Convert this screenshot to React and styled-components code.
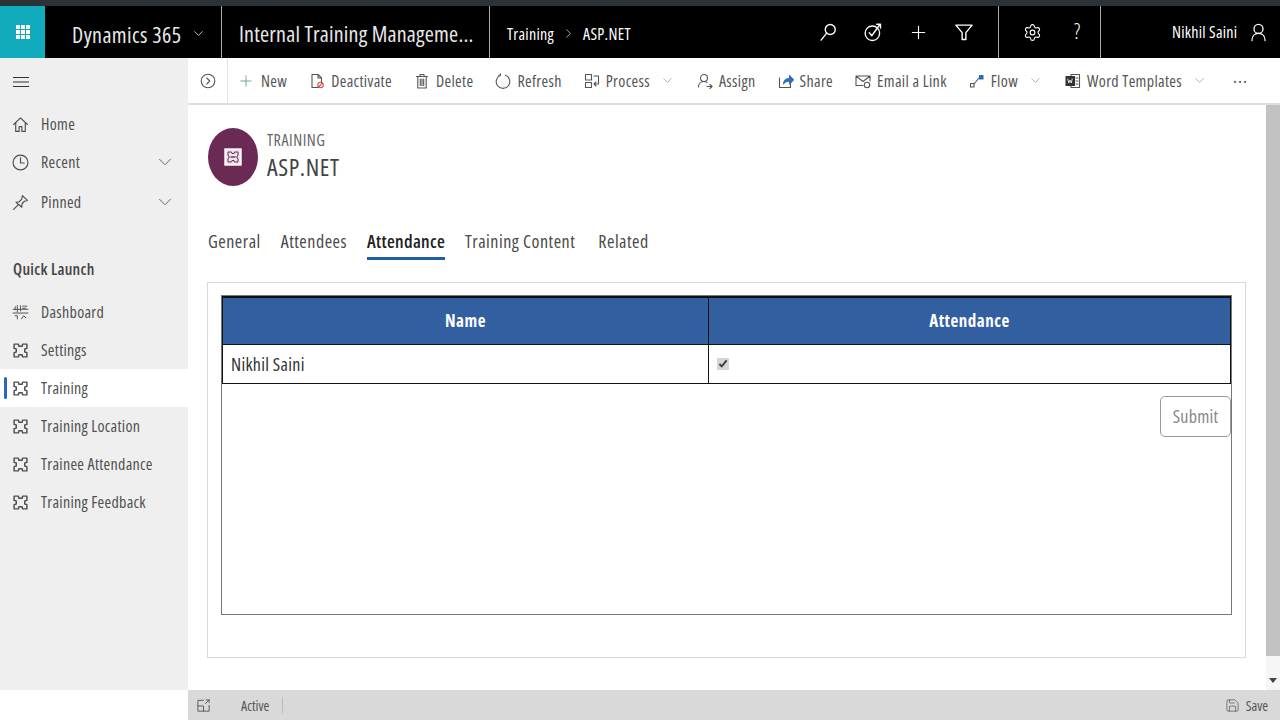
import React from 'react';
import styled, { createGlobalStyle } from 'styled-components';
import { ChevronDown, ChevronRight, Plus, Settings, Save } from 'lucide-react';

const GlobalStyle = createGlobalStyle`
  html, body { margin: 0; padding: 0; height: 100%; overflow: hidden; background: #fff; }
  #root { height: 100%; }
  * { box-sizing: border-box; }
  body {
    font-family: "Open Sans", "Noto Sans", "Liberation Sans", sans-serif;
    font-stretch: 85%;
  }
`;

function Icon({ size = 16, w, h, sw = 1.1, children, ...rest }) {
  return (
    <svg width={w || size} height={h || size} viewBox="0 0 16 16" fill="none" stroke="currentColor" strokeWidth={sw} strokeLinecap="round" strokeLinejoin="round" {...rest}>
      {children}
    </svg>
  );
}

const Puzzle = () => (
  <Icon size={17} sw={1.4}>
    <path d="M2 2h4l.5 2h3L10 2h4v4l-2 .5v3l2 .5v4h-4l-.5-2h-3L6 14H2v-4l2-.5v-3L2 6z" />
  </Icon>
);

const Dashboard = () => (
  <Icon size={17} sw={0.9}>
    <path d="M1 5h14M1 8.500h14M5 1.500v6M3 2.500v3M8 1.500v5M10 2h4M10 4h3M3 11h2v3M9 14l2-3 2 2" />
  </Icon>
);

const navItems = [
  { label: 'Dashboard', icon: <Dashboard /> },
  { label: 'Settings', icon: <Puzzle /> },
  { label: 'Training', icon: <Puzzle />, active: true },
  { label: 'Training Location', icon: <Puzzle /> },
  { label: 'Trainee Attendance', icon: <Puzzle /> },
  { label: 'Training Feedback', icon: <Puzzle /> },
];

const commands = [
  { label: 'New', icon: <Plus size={18} color="#4f9c8c" strokeWidth={1.1} /> },
  {
    label: 'Deactivate',
    icon: (
      <Icon>
        <path d="M9 14.500H3V1.500h6l3.500 3.500v3.500M9 1.500V5h3.500" />
        <circle cx="11.500" cy="12" r="2.700" stroke="#c8513a" />
        <path d="M9.700 13.800l3.600-3.600" stroke="#c8513a" />
      </Icon>
    ),
  },
  {
    label: 'Delete',
    icon: (
      <Icon>
        <path d="M2.500 3.500h11M6 3.500V1.500h4v2M3.800 3.500v11.500h8.400V3.500M6.300 6v6.500M8 6v6.500M9.700 6v6.500" />
      </Icon>
    ),
  },
  {
    label: 'Refresh',
    icon: (
      <Icon>
        <path d="M10.500 2.300a6.800 6.800 0 1 1-5 0M5.500 2.300V.8M5.500 2.300H3.800" />
      </Icon>
    ),
  },
  {
    label: 'Process',
    caret: true,
    icon: (
      <Icon>
        <path d="M1.500 1.500h6v5.500h-6zM1.500 9.500h6v5h-6zM10 3h4.500v8H10M12 9l-2 2 2 2" />
      </Icon>
    ),
  },
  {
    label: 'Assign',
    icon: (
      <Icon>
        <circle cx="7" cy="5" r="3.500" />
        <path d="M1.500 14c0-3 2.200-5.500 5.500-5.500 1.200 0 2.200.3 3 .9M10 13.500h5M13 11.500l2 2-2 2" />
      </Icon>
    ),
  },
  {
    label: 'Share',
    icon: (
      <Icon>
        <path d="M1.500 5v9.500h11V11" />
        <path d="M5.500 11c.4-3.800 3-5.500 6-5.500V2.500l4 4.300-4 4.200V8c-2.700 0-4.700.8-6 3z" fill="#2f6db5" stroke="#2f6db5" />
      </Icon>
    ),
  },
  {
    label: 'Email a Link',
    icon: (
      <Icon>
        <path d="M8 12.500H1V3h14v5M1 3l7 5.500L15 3" />
        <circle cx="12" cy="12" r="2.700" />
      </Icon>
    ),
  },
  {
    label: 'Flow',
    caret: true,
    icon: (
      <Icon>
        <rect x="1.500" y="10.500" width="3.500" height="3.500" />
        <path d="M5 11l5-6" />
        <rect x="10.500" y="2.500" width="3.500" height="3.500" stroke="#2f6db5" fill="#2f6db5" />
      </Icon>
    ),
  },
  {
    label: 'Word Templates',
    caret: true,
    icon: (
      <Icon>
        <path d="M6 1.500h8.500v13H6z" fill="#fff" />
        <rect x="1" y="3.500" width="8.500" height="9" fill="#333" stroke="#333" />
        <path d="M11 5h2M11 8h2M11 11h2" />
        <path d="M2.800 6l1 4 1.200-3 1.200 3 1-4" stroke="#fff" strokeWidth="0.8" />
      </Icon>
    ),
  },
];

const tabs = ['General', 'Attendees', 'Attendance', 'Training Content', 'Related'];

export default function App() {
  return (
    <>
      <GlobalStyle />
      <Page>
        <TopStrip />
        <Header>
          <Waffle>
            <svg width="16" height="16" viewBox="0 0 16 16" fill="#fff">
              {[0, 1, 2].map((r) =>
                [0, 1, 2].map((c) => <rect key={`${r}${c}`} x={1 + c * 5} y={1 + r * 5} width="4" height="4" />)
              )}
            </svg>
          </Waffle>
          <BrandCell>
            <Brand>Dynamics 365</Brand>
            <ChevronDown size={15} strokeWidth={1.2} />
          </BrandCell>
          <AppCell>Internal Training Manageme...</AppCell>
          <Crumbs>
            <span>Training</span>
            <ChevronRight size={15} strokeWidth={1} />
            <span>ASP.NET</span>
          </Crumbs>
          <HeaderTools>
            <Icon size={20} sw={1.1}>
              <circle cx="9.800" cy="6" r="4" />
              <path d="M6.900 8.900L2.500 14.500" />
            </Icon>
            <Icon size={20} sw={1.1}>
              <circle cx="7.500" cy="9" r="5.800" />
              <path d="M5 8.500l2 2.500 6.500-9M11 1.800h3v3" />
            </Icon>
            <Plus size={21} strokeWidth={1.3} />
            <Icon size={20} sw={1.1}>
              <path d="M1.500 2.500h13L9.500 8.500v5.500h-3V8.500z" />
            </Icon>
          </HeaderTools>
          <HelpTools>
            <Settings size={19} strokeWidth={1.4} />
            <Question>?</Question>
          </HelpTools>
          <UserCell>
            <span>Nikhil Saini</span>
            <Icon size={19} sw={1.1}>
              <circle cx="8" cy="5" r="3.800" />
              <path d="M2.500 14.800c0-3.400 2-6 5.500-6s5.500 2.600 5.500 6" />
            </Icon>
          </UserCell>
        </Header>
        <Body>
          <Sidebar>
            <Burger>
              <svg width="16" height="12" viewBox="0 0 16 12" stroke="#333" strokeWidth="1.2">
                <path d="M0 1.500h16M0 6h16M0 10.500h16" />
              </svg>
            </Burger>
            <NavRow>
              <Icon size={17}>
                <path d="M1.500 8L8 1.800 14.500 8M3.500 6.500v8h3.200v-4.500h2.600v4.500h3.200v-8" />
              </Icon>
              <NavLabel>Home</NavLabel>
            </NavRow>
            <NavRow>
              <Icon size={17}>
                <circle cx="8" cy="8" r="7" />
                <path d="M8 3.500V8.500h3.500" />
              </Icon>
              <NavLabel>Recent</NavLabel>
              <ChevronDown size={22} strokeWidth={0.9} />
            </NavRow>
            <NavRow $tall>
              <Icon size={17}>
                <path d="M9.800 1.500l4.700 4.500-2.800.8-2.300 2.400-.2 3.300L3.800 7.800l3-.5 2.400-2.400zM6 10l-4.500 4.500" />
              </Icon>
              <NavLabel>Pinned</NavLabel>
              <ChevronDown size={22} strokeWidth={0.9} />
            </NavRow>
            <GroupTitle>Quick Launch</GroupTitle>
            {navItems.map((item) => (
              <NavRow key={item.label} $active={item.active}>
                {item.icon}
                <NavLabel>{item.label}</NavLabel>
              </NavRow>
            ))}
          </Sidebar>
          <Main>
            <CommandBar>
              <ExpandCell>
                <Icon size={16}>
                  <circle cx="8" cy="8" r="6.800" />
                  <path d="M6.800 5l3 3-3 3" />
                </Icon>
              </ExpandCell>
              <Commands>
                {commands.map((cmd) => (
                  <Command key={cmd.label}>
                    {cmd.icon}
                    <span>{cmd.label}</span>
                    {cmd.caret && (
                      <Caret>
                        <ChevronDown size={15} strokeWidth={0.9} />
                      </Caret>
                    )}
                  </Command>
                ))}
                <More>···</More>
              </Commands>
            </CommandBar>
            <Workspace>
              <Content>
                <RecordHead>
                  <Avatar>
                    <svg width="18" height="18" viewBox="0 0 18 18">
                      <rect x="1" y="1" width="16" height="16" fill="#efe3ec" stroke="#fff" strokeWidth="1.400" />
                      <path d="M4 4h3.500l.5 1.500h2L10.500 4H14v3.500l-1 .5v2l1 .5V14h-3.500L10 12.500H8L7.500 14H4v-3.500l1-.5V8l-1-.5z" fill="none" stroke="#6b2a54" strokeWidth="1" />
                      <path d="M6.500 9h5" stroke="#6b2a54" strokeWidth="1.400" />
                    </svg>
                  </Avatar>
                  <div>
                    <RecordType>TRAINING</RecordType>
                    <RecordName>ASP.NET</RecordName>
                  </div>
                </RecordHead>
                <Tabs>
                  {tabs.map((tab) => (
                    <Tab key={tab} $active={tab === 'Attendance'}>
                      {tab}
                    </Tab>
                  ))}
                </Tabs>
                <Card>
                  <Frame>
                    <Table>
                      <thead>
                        <tr>
                          <Th $name>Name</Th>
                          <Th>Attendance</Th>
                        </tr>
                      </thead>
                      <tbody>
                        <tr>
                          <Td>Nikhil Saini</Td>
                          <Td>
                            <Check type="checkbox" defaultChecked />
                          </Td>
                        </tr>
                      </tbody>
                    </Table>
                    <Actions>
                      <SubmitButton type="button">Submit</SubmitButton>
                    </Actions>
                  </Frame>
                </Card>
              </Content>
              <Scrollbar>
                <Thumb />
                <ArrowDown />
              </Scrollbar>
            </Workspace>
          </Main>
        </Body>
        <StatusBar>
          <StatusLeft>
            <Icon size={15} sw={1}>
              <path d="M14 8v6H2V2.500h6M2 8.500h6V14M10 6l4-4M11 2h3v3" />
            </Icon>
            <StatusText>Active</StatusText>
            <StatusRule />
          </StatusLeft>
          <SaveButton>
            <Save size={15} strokeWidth={1.2} />
            <span>Save</span>
          </SaveButton>
        </StatusBar>
      </Page>
    </>
  );
}

const Page = styled.div`
  height: 720px;
  display: flex;
  flex-direction: column;
  color: #444;
`;

const TopStrip = styled.div`
  height: 6px;
  background: #2c3238;
  flex: none;
`;

const Header = styled.header`
  height: 52px;
  flex: none;
  background: #000;
  color: #fff;
  display: flex;
  align-items: stretch;
`;

const Waffle = styled.div`
  width: 45px;
  flex: none;
  background: #10abbd;
  display: flex;
  align-items: center;
  justify-content: center;
`;

const BrandCell = styled.div`
  width: 177px;
  flex: none;
  padding: 3px 0 0 27px;
  border-right: 1px solid #aaa;
  display: flex;
  align-items: center;
  gap: 10px;
  white-space: nowrap;
`;

const Brand = styled.span`
  font-size: 22px;
  letter-spacing: 0.4px;
  color: #e8e8e8;
`;

const AppCell = styled.div`
  width: 268px;
  flex: none;
  padding: 2px 0 0 17px;
  border-right: 1px solid #aaa;
  display: flex;
  align-items: center;
  font-size: 22px;
  letter-spacing: 0.2px;
  color: #e8e8e8;
  white-space: nowrap;
`;

const Crumbs = styled.div`
  flex: 1;
  padding: 3px 0 0 17px;
  display: flex;
  align-items: center;
  gap: 7px;
  font-size: 16px;
  letter-spacing: 0.3px;
`;

const HeaderTools = styled.div`
  display: flex;
  align-items: center;
  gap: 25px;
  padding-right: 24px;
  border-right: 1px solid #aaa;
`;

const HelpTools = styled.div`
  width: 102px;
  flex: none;
  padding-left: 24px;
  display: flex;
  align-items: center;
  gap: 32px;
  border-right: 1px solid #aaa;
`;

const Question = styled.span`
  font-size: 22px;
  font-weight: 300;
  margin-top: -4px;
`;

const UserCell = styled.div`
  flex: none;
  width: 179px;
  padding: 0 0 0 71px;
  display: flex;
  align-items: center;
  gap: 12px;
  font-size: 16px;
  letter-spacing: 0.25px;
  white-space: nowrap;
`;

const Body = styled.div`
  flex: 1;
  min-height: 0;
  display: flex;
`;

const Sidebar = styled.nav`
  width: 188px;
  flex: none;
  background: #efefef;
  color: #505050;
`;

const Burger = styled.div`
  height: 47px;
  padding-left: 13px;
  display: flex;
  align-items: center;
`;

const NavRow = styled.div`
  position: relative;
  height: 38px;
  margin-top: ${(p) => (p.$tall ? '2px' : '0')};
  padding: 0 12px 0 12px;
  display: flex;
  align-items: center;
  gap: 12px;
  font-size: 16px;
  letter-spacing: 0.3px;
  background: ${(p) => (p.$active ? '#fff' : 'transparent')};

  &::before {
    content: '';
    display: ${(p) => (p.$active ? 'block' : 'none')};
    position: absolute;
    left: 4px;
    top: 8px;
    width: 3px;
    height: 22px;
    border-radius: 2px;
    background: #2b66c4;
  }
`;

const NavLabel = styled.span`
  flex: 1;
  white-space: nowrap;
`;

const GroupTitle = styled.div`
  height: 40px;
  margin-top: 28px;
  margin-bottom: 4px;
  padding-left: 13px;
  display: flex;
  align-items: center;
  font-size: 16px;
  font-weight: 600;
  letter-spacing: 0.3px;
  color: #444;
`;

const Main = styled.main`
  flex: 1;
  min-width: 0;
  display: flex;
  flex-direction: column;
`;

const CommandBar = styled.div`
  height: 47px;
  flex: none;
  border-bottom: 2px solid #dedede;
  display: flex;
  color: #555;
`;

const ExpandCell = styled.div`
  width: 40px;
  flex: none;
  border-right: 1px solid #e3e3e3;
  display: flex;
  align-items: center;
  justify-content: center;
`;

const Commands = styled.div`
  flex: 1;
  padding-left: 9px;
  display: flex;
  align-items: center;
  gap: 22px;
`;

const Command = styled.div`
  display: flex;
  align-items: center;
  gap: 6px;
  font-size: 16px;
  letter-spacing: 0.35px;
  white-space: nowrap;
`;

const Caret = styled.span`
  display: flex;
  margin-left: 4px;
  color: #777;
`;

const More = styled.span`
  margin-left: 4px;
  font-size: 18px;
  letter-spacing: 1px;
  line-height: 1;
`;

const Workspace = styled.div`
  flex: 1;
  min-height: 0;
  display: flex;
`;

const Content = styled.div`
  flex: 1;
  min-width: 0;
  padding: 23px 20px 0 19px;
`;

const RecordHead = styled.div`
  padding-left: 1px;
  display: flex;
  align-items: center;
  gap: 9px;
`;

const Avatar = styled.div`
  width: 50px;
  height: 58px;
  border-radius: 50%;
  background: #6b2a54;
  display: flex;
  align-items: center;
  justify-content: center;
`;

const RecordType = styled.div`
  margin-top: -2px;
  font-size: 16px;
  line-height: 20px;
  letter-spacing: 0.55px;
  color: #666;
`;

const RecordName = styled.div`
  margin-top: 2px;
  font-size: 24px;
  line-height: 30px;
  letter-spacing: 0.6px;
  color: #444;
`;

const Tabs = styled.div`
  margin-top: 38px;
  padding-left: 1px;
  display: flex;
  gap: 20px;
`;

const Tab = styled.div`
  height: 36px;
  padding-top: 6px;
  font-size: 18px;
  line-height: 22px;
  letter-spacing: ${(p) => (p.$active ? '0.3px' : '0.5px')};
  font-weight: ${(p) => (p.$active ? 600 : 400)};
  color: ${(p) => (p.$active ? '#222' : '#4a4a4a')};
  border-bottom: 3px solid ${(p) => (p.$active ? '#1f5fa8' : 'transparent')};

  &:last-child {
    margin-left: 3px;
  }
`;

const Card = styled.section`
  margin-top: 22px;
  height: 376px;
  padding: 12px 13px 0 13px;
  border: 1px solid #d9d9d9;
`;

const Frame = styled.div`
  height: 320px;
  border: 1px solid #777;
`;

const Table = styled.table`
  width: 100%;
  border-collapse: collapse;
  table-layout: fixed;
`;

const Th = styled.th`
  width: ${(p) => (p.$name ? '486px' : 'auto')};
  height: 47px;
  background: #315f9f;
  color: #fff;
  font-size: 17px;
  font-weight: 700;
  letter-spacing: 0.5px;
  border: 1px solid #111;
  border-top-width: 2px;
`;

const Td = styled.td`
  height: 39px;
  padding: 0 8px;
  font-size: 18px;
  letter-spacing: 0.3px;
  color: #333;
  border: 1px solid #111;
`;

const Check = styled.input`
  display: block;
  width: 12px;
  height: 12px;
  margin: 0;
  accent-color: #d6d6d6;
`;

const Actions = styled.div`
  margin-top: 12px;
  display: flex;
  justify-content: flex-end;
`;

const SubmitButton = styled.button`
  width: 71px;
  height: 41px;
  border: 1px solid #999;
  border-radius: 5px;
  background: #fff;
  color: #888;
  font: inherit;
  font-size: 18px;
  letter-spacing: 0.25px;
`;

const Scrollbar = styled.div`
  width: 14px;
  flex: none;
  background: #f6f6f6;
  display: flex;
  flex-direction: column;
  align-items: center;
`;

const Thumb = styled.div`
  width: 100%;
  flex: 1;
  margin-bottom: 22px;
  background: #c2c2c2;
`;

const ArrowDown = styled.div`
  width: 0;
  height: 0;
  margin-bottom: 7px;
  border-left: 4px solid transparent;
  border-right: 4px solid transparent;
  border-top: 5px solid #444;
`;

const StatusBar = styled.footer`
  height: 30px;
  flex: none;
  margin-left: 188px;
  padding: 0 12px 0 8px;
  background: #d9d9d9;
  color: #555;
  display: flex;
  align-items: center;
  justify-content: space-between;
  font-size: 14px;
`;

const StatusLeft = styled.div`
  display: flex;
  align-items: center;
`;

const StatusText = styled.span`
  margin-left: 30px;
`;

const StatusRule = styled.span`
  width: 1px;
  height: 16px;
  margin-left: 13px;
  background: #bbb;
`;

const SaveButton = styled.div`
  display: flex;
  align-items: center;
  gap: 6px;
`;
